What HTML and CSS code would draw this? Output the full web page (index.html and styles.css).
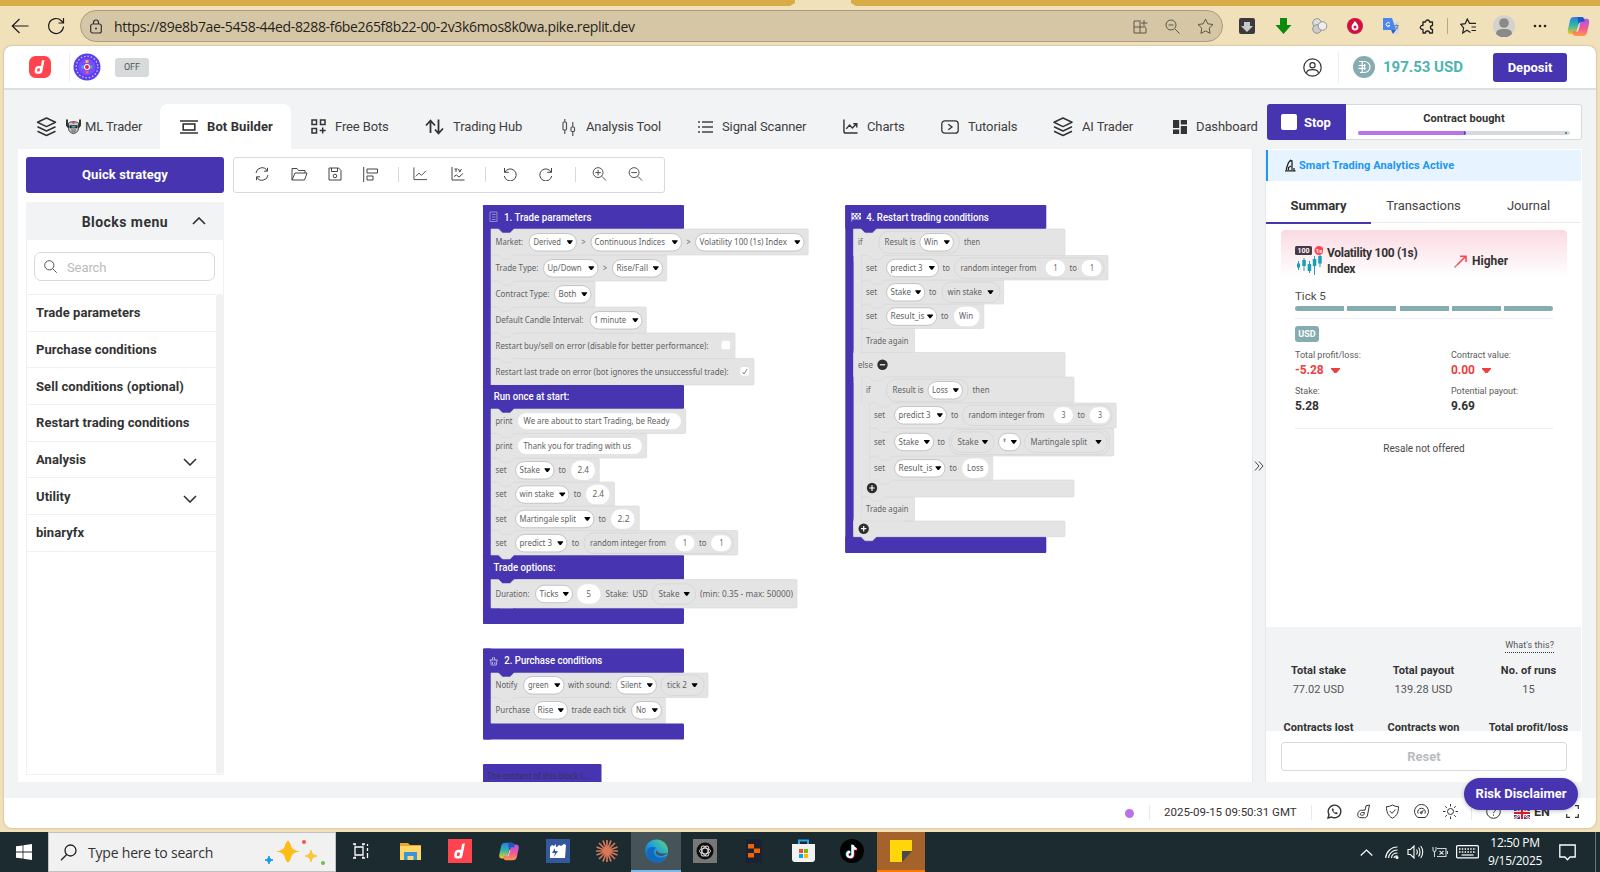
FILE: index.html
```html
<!DOCTYPE html>
<html lang="en">
<head>
<meta charset="utf-8">
<title>Bot Builder</title>
<link rel="stylesheet" href="styles.css">
</head>
<body>
<svg class="defs" width="0" height="0">
  <defs>
    <linearGradient id="cpA" x1="0" y1="0" x2="0" y2="1"><stop offset="0" stop-color="#2a7de1"/><stop offset=".5" stop-color="#2fb8a8"/><stop offset="1" stop-color="#ffc61a"/></linearGradient>
    <linearGradient id="cpB" x1="0" y1="0" x2="0" y2="1"><stop offset="0" stop-color="#a55be8"/><stop offset=".55" stop-color="#f0589a"/><stop offset="1" stop-color="#ff9a4a"/></linearGradient>
    <linearGradient id="edgeG" x1="0" y1="1" x2="1" y2="0"><stop offset="0" stop-color="#0c59a4"/><stop offset=".5" stop-color="#1f9de0"/><stop offset="1" stop-color="#5fdc6a"/></linearGradient>
    <symbol id="copilot" viewBox="0 0 24 24"><path d="M8 2h7c2 0 2.500 1 3 3l.5 2h-3c-2 0-3 1-3.500 3l-2 7c-.6 2-1.500 3-3.500 3H4c-3 0-3.500-2-3-5l2-9c.7-3 2-4 5-4z" fill="url(#cpA)"/><path d="M16 22H9c-2 0-2.500-1-3-3l-.5-2h3c2 0 3-1 3.500-3l2-7c.6-2 1.500-3 3.500-3H20c3 0 3.500 2 3 5l-2 9c-.7 3-2 4-5 4z" fill="url(#cpB)"/><path d="M11 2h4c2 0 2.500 1 3 3l.5 2h-3c-2 0-3 1-3.500 3z" fill="#1e56c8"/><path d="M12.500 9.500l-2 6-1 2h2l2-6z" fill="#f0e1bb" opacity=".8"/></symbol>
    <symbol id="layers" viewBox="0 0 20 20"><g fill="none" stroke="#333" stroke-width="1.500" stroke-linejoin="round"><path d="M10 1l9 4.300-9 4.300-9-4.300z"/><path d="M1 9.700l9 4.300 9-4.300M1 14.200l9 4.300 9-4.300"/></g></symbol>
    <symbol id="deriv" viewBox="0 0 22 22"><rect width="22" height="22" rx="6.500" fill="#ff444f"/><path d="M15.500 4l-2.200 11.500a2.800 2.800 0 0 1-2.800 2.300H8.300c-2 0-3-1.500-2.600-3.200l.3-1.700c.3-1.800 1.600-3 3.400-3h2.600L12.900 4.500zM9.400 12.400c-.7 0-.9.300-1 .9l-.3 1.500c-.1.500.1.700.6.700h1c.6 0 .8-.3.900-.7l.5-2.400z" fill="#fff" fill-rule="evenodd"/></symbol>
  </defs>
</svg>

<div class="tabstrip"><span class="tabstrip-gap"></span></div>

<div class="chrome">
  <svg class="nav-back" viewBox="0 0 18 16"><path d="M17.500 8H1.500M8.500 1L1.300 8l7.200 7" fill="none" stroke="#1b1b1b" stroke-width="1.200"/></svg>
  <svg class="nav-reload" viewBox="0 0 18 18"><path d="M16.500 9.500a7.500 7.500 0 1 1-2.200-5.800l2 2M16.500 1v5h-5" fill="none" stroke="#1b1b1b" stroke-width="1.200"/></svg>
  <div class="urlbar">
    <svg width="12" height="15" viewBox="0 0 12 15"><rect x=".7" y="5" width="10.600" height="9" rx="2" fill="none" stroke="#333" stroke-width="1.200"/><path d="M3.500 5V3.500a2.500 2.500 0 0 1 5 0V5" fill="none" stroke="#333" stroke-width="1.200"/><circle cx="6" cy="9.500" r="1" fill="#333"/></svg>
    <span class="url">https://89e8b7ae-5458-44ed-8288-f6be265f8b22-00-2v3k6mos8k0wa.pike.replit.dev</span>
    <span class="url-actions">
      <svg width="15" height="15" viewBox="0 0 15 15"><path d="M6 2H1v12h12V9M7 1v13M1 8h12M11 1v6M8 4h6.500" fill="none" stroke="#5d5646"/></svg>
      <svg width="15" height="15" viewBox="0 0 15 15"><path d="M10 10l4.500 4.500M3.500 6h5" stroke="#5d5646"/><circle cx="6" cy="6" r="5" fill="none" stroke="#5d5646"/></svg>
      <svg width="17" height="16" viewBox="0 0 17 16"><path d="M8.500 1l2.300 4.800 5.200.7-3.800 3.700.9 5.200-4.600-2.500-4.600 2.500.9-5.200L1 6.500l5.200-.7z" fill="none" stroke="#5d5646"/></svg>
    </span>
  </div>
  <div class="exts">
    <span><svg width="16" height="16" viewBox="0 0 16 16"><rect width="16" height="16" rx="2" fill="#3a3a3c"/><path d="M5 4h6v4h3l-6 6-6-6h3z" fill="#c9c9c9"/></svg></span>
    <span><svg width="17" height="16" viewBox="0 0 17 16"><path d="M5 0h7v7h4.500l-8 9-8-9H5z" fill="#0c8a0c"/></svg></span>
    <span><svg width="17" height="16" viewBox="0 0 17 16"><g stroke="#8a8a8a" stroke-width=".9"><circle cx="6" cy="5" r="4.300" fill="#ddd"/><circle cx="6" cy="11" r="4.300" fill="#ccc"/><circle cx="11.500" cy="8" r="4.300" fill="#eee"/></g></svg></span>
    <span><svg width="16" height="16" viewBox="0 0 16 16"><circle cx="8" cy="8" r="8" fill="#cf1040"/><path d="M8 3c2 2.500 3.400 4 3.400 6a3.400 3.400 0 0 1-6.800 0c0-2 1.400-3.500 3.400-6z" fill="#fff"/><circle cx="8" cy="9" r="1.500" fill="#cf1040"/></svg></span>
    <span><svg width="17" height="16" viewBox="0 0 17 16"><path d="M7 4h9v12H9z" fill="#d7dae0"/><path d="M0 0h9l4 12H0z" fill="#4a86f0"/><path d="M8 12h5l-3 4z" fill="#2b5fc4"/><path d="M7 5.500a2 2 0 1 0 0 2H5.200" stroke="#fff" fill="none"/><path d="M11.500 7.500h4M13.500 6.500v1M15 7.500c-.3 2-1.500 3.500-3 4.500M12.500 8.500l2.500 3" stroke="#70767f" stroke-width=".9" fill="none"/></svg></span>
    <span><svg width="16" height="17" viewBox="0 0 16 17"><path d="M4 4h2.500a2 2 0 1 1 4 0H13.500v3.500a2 2 0 1 0 0 4V15H10.500a2 2 0 0 0-4 0H4V11.300a2 2 0 1 1 0-3.800z" fill="none" stroke="#222" stroke-width="1.300" stroke-linejoin="round"/></svg></span>
    <i></i>
    <span><svg width="17" height="16" viewBox="0 0 17 16"><path d="M10.500 14.500L7 12.300 2.700 15l.9-5L.8 6.300l4.500-.7L7.300 1l2.200 4.300H16M11.500 9H16M11.500 12.500H16" fill="none" stroke="#222" stroke-width="1.200"/></svg></span>
    <span><svg width="22" height="22" viewBox="0 0 22 22"><circle cx="11" cy="11" r="11" fill="#d4d2ce"/><circle cx="11" cy="8" r="4.800" fill="#8c8a88"/><path d="M3 19c0-4 3-5 8-5s8 1 8 5a11 11 0 0 1-16 0z" fill="#8c8a88"/></svg></span>
    <span><svg width="14" height="4" viewBox="0 0 14 4"><g fill="#222"><circle cx="2" cy="2" r="1.300"/><circle cx="7" cy="2" r="1.300"/><circle cx="12" cy="2" r="1.300"/></g></svg></span>
    <span class="wide"><svg width="23" height="23"><use href="#copilot"/></svg></span>
  </div>
</div>

<div class="page">
  <header class="header">
    <svg class="brand" width="22" height="22"><use href="#deriv"/></svg>
    <i class="vline"></i>
    <svg class="spin-logo" width="28" height="28" viewBox="0 0 28 28"><circle cx="14" cy="14" r="13.500" fill="#5b3df0"/><circle cx="14" cy="14" r="10.800" fill="none" stroke="#cfc6ff" stroke-width="1.300" stroke-dasharray="1.500 1.900"/><circle cx="14" cy="14" r="8.500" fill="#7a4cff"/><rect x="12.500" y="7" width="3" height="3" fill="#ffb52e"/><rect x="12.500" y="18" width="3" height="2.500" fill="#ff6a4a"/><rect x="8.500" y="12.500" width="2.500" height="3" fill="#3fb0e8"/><rect x="17" y="12.500" width="2.500" height="3" fill="#44c07a"/><circle cx="14" cy="14" r="3" fill="#fff"/><circle cx="14" cy="14" r="2" fill="#e8174f"/></svg>
    <span class="off">OFF</span>
    <span class="grow"></span>
    <svg class="user" width="19" height="19" viewBox="0 0 19 19"><g fill="none" stroke="#333" stroke-width="1.200"><circle cx="9.500" cy="9.500" r="8.700"/><circle cx="9.500" cy="7.300" r="2.600"/><path d="M3.500 15.500c0-3 2-3.800 6-3.800s6 .8 6 3.800"/></g></svg>
    <i class="vline tall"></i>
    <svg class="coin" width="22" height="22" viewBox="0 0 22 22"><circle cx="11" cy="11" r="11" fill="#85acb0"/><path d="M6 5.500h5.500a5.500 5.500 0 0 1 0 11H7M9.200 5.500v11M11.700 8v6M5.500 9.500h7M5.500 12.300h7" fill="none" stroke="#fff" stroke-width="1.200"/></svg>
    <b class="balance">197.53 USD</b>
    <button class="deposit">Deposit</button>
  </header>

  <div class="body">
    <section class="left">
      <nav class="tabs">
        <div class="tab"><svg width="21" height="20"><use href="#layers"/></svg><svg class="robot" width="15" height="15" viewBox="0 0 15 15"><path d="M1 .5v6l2 2.500M14 .5v6L12 9" fill="none" stroke="#222" stroke-width="1.800"/><path d="M2.500 4C4 3 5 2.800 7.500 2.800S11 3 12.500 4v5.500c0 2.500-2.500 5-5 5s-5-2.500-5-5z" fill="#c6cace" stroke="#222" stroke-width=".8"/><path d="M3.500 6.300h8v3h-8z" fill="#1d2226"/><path d="M6.500 2.500h2v2h-2z" fill="#e23"/><path d="M5.500 7.300h4v1.200h-4z" fill="#5cd0ea"/><path d="M5 11h5M5.500 12.800h4" stroke="#444" stroke-width=".8"/></svg><span>ML Trader</span></div>
        <div class="tab active"><svg width="18" height="14" viewBox="0 0 18 14"><path d="M0 1h18M0 13h18" stroke="#333" stroke-width="1.400"/><rect x="3.200" y="4" width="11.600" height="6" fill="none" stroke="#333" stroke-width="1.600"/></svg><span>Bot Builder</span></div>
        <div class="tab"><svg width="15" height="15" viewBox="0 0 15 15"><g fill="none" stroke="#333" stroke-width="1.500"><rect x="1" y="1" width="4.500" height="4.500"/><rect x="9.500" y="1" width="4.500" height="4.500"/><rect x="1" y="9.500" width="4.500" height="4.500"/><path d="M11.700 8.500v6M8.700 11.500h6"/></g></svg><span>Free Bots</span></div>
        <div class="tab"><svg width="19" height="16" viewBox="0 0 19 16"><path d="M5.500 14V2M1 6.500L5.500 1.500l4.500 5M13.500.5V14M18 9.500L13.500 14.500l-3.500-4" fill="none" stroke="#333" stroke-width="1.800"/></svg><span>Trading Hub</span></div>
        <div class="tab"><svg width="16" height="18" viewBox="0 0 16 18"><g fill="none" stroke="#555" stroke-width="1.200"><rect x="2" y="4" width="3.500" height="8" rx="1"/><path d="M3.800 1v3M3.800 12v4M11.800 4v5M11.800 13v5"/><rect x="10" y="9" width="3.500" height="4.500" rx="1"/></g></svg><span>Analysis Tool</span></div>
        <div class="tab"><svg width="15" height="14" viewBox="0 0 15 14"><path d="M4 2h11M4 7h11M4 12h11M0 2h2M0 7h2M0 12h2" stroke="#444" stroke-width="1.400"/></svg><span>Signal Scanner</span></div>
        <div class="tab"><svg width="15" height="15" viewBox="0 0 16 16"><path d="M1 .5V13c0 1.300.7 2 2 2h12.500M3.500 10.500l3.500-4 3 3 4.500-4.500M11 5h3.700v4" fill="none" stroke="#333" stroke-width="1.500"/></svg><span>Charts</span></div>
        <div class="tab"><svg width="18" height="14" viewBox="0 0 18 14"><rect x=".8" y=".8" width="16.400" height="12.400" rx="3" fill="none" stroke="#333" stroke-width="1.300"/><path d="M7.300 4.300L11 7l-3.700 2.700" fill="none" stroke="#333" stroke-width="1.300"/></svg><span>Tutorials</span></div>
        <div class="tab"><svg width="20" height="20"><use href="#layers"/></svg><span>AI Trader</span></div>
        <div class="tab"><svg width="14" height="14" viewBox="0 0 14 14"><path d="M0 0h6.200v8H0zM7.800 0H14v4.500H7.800zM0 9.500h6.200V14H0zM7.800 6H14v8H7.800z" fill="#333"/></svg><span>Dashboard</span></div>
      </nav>
      <div class="builder">
        <aside class="side">
          <button class="quick">Quick strategy</button>
          <div class="menu-head"><span>Blocks menu</span><svg width="14" height="8" viewBox="0 0 14 8"><path d="M1 7l6-6 6 6" fill="none" stroke="#333" stroke-width="1.700"/></svg></div>
          <div class="menu">
            <div class="search-row"><div class="search"><svg width="13" height="13" viewBox="0 0 13 13"><circle cx="5.300" cy="5.300" r="4.600" fill="none" stroke="#555"/><path d="M8.700 8.700l4 4" stroke="#555"/></svg><span>Search</span></div></div>
            <div class="menu-scroll">
              <ul>
                <li>Trade parameters</li>
                <li>Purchase conditions</li>
                <li>Sell conditions (optional)</li>
                <li>Restart trading conditions</li>
                <li>Analysis<svg width="14" height="8" viewBox="0 0 14 8"><path d="M1 1l6 6 6-6" fill="none" stroke="#333" stroke-width="1.600"/></svg></li>
                <li>Utility<svg width="14" height="8" viewBox="0 0 14 8"><path d="M1 1l6 6 6-6" fill="none" stroke="#333" stroke-width="1.600"/></svg></li>
                <li>binaryfx</li>
              </ul>
              <span class="track"></span>
            </div>
          </div>
        </aside>
        <div class="work">
          <div class="toolbar">
            <svg viewBox="0 0 14 14"><path d="M1 6a6 6 0 0 1 11.300-2M13 8A6 6 0 0 1 1.700 10M12.500.8v3.400H9M1.500 13.200V9.800H5"/></svg>
            <svg class="folder" viewBox="0 0 17 14"><path d="M1 13V1.500h5l1.500 2H14V6M1 13l3-7h12l-2.500 7z"/></svg>
            <svg viewBox="0 0 14 14"><path d="M1 1h9.500L13 3.500V13H1zM3.500 1v3.500h6V1"/><circle cx="7" cy="9" r="1.800"/></svg>
            <svg class="align" viewBox="0 0 15 15"><path d="M.7 0v15M4 2h10.500v4H4zM4 9h6v4H4z"/></svg>
            <i></i>
            <svg viewBox="0 0 15 14"><path d="M1 0v13h14M3 9.500l3.500-3.500 2.500 2.500L14 3.500"/></svg>
            <svg class="tv" viewBox="0 0 14 14"><path d="M1 0v13h12.500M3 9.500l2.500-1.500 2.500 2L12 6.500M3.500 2h3M5 2v3M7.500 2l1.300 3L10.500 2"/></svg>
            <i></i>
            <svg class="undo" viewBox="0 0 14 14"><path d="M1.500 1v4.300h4.300M1.800 5.300A6 6 0 1 1 1.300 9"/></svg>
            <svg viewBox="0 0 14 14"><path d="M12.500 1v4.300H8.200M12.200 5.300A6 6 0 1 0 12.700 9"/></svg>
            <i></i>
            <svg class="zin" viewBox="0 0 15 15"><circle cx="6" cy="6" r="5.300"/><path d="M10 10l4.500 4.500M3 6h6M6 3v6"/></svg>
            <svg class="zout" viewBox="0 0 15 15"><circle cx="6" cy="6" r="5.300"/><path d="M10 10l4.500 4.500M3 6h6"/></svg>
          </div>
          <svg id="workspace" width="1020" height="582" viewBox="233 200 1020 582"></svg>
        </div>
      </div>
    </section>

    <div class="drawer-toggle"><svg width="10" height="10" viewBox="0 0 10 10"><path d="M1 .5L5 5 1 9.500M5 .5L9 5 5 9.500" fill="none" stroke="#444"/></svg></div>

    <section class="right">
      <div class="run">
        <button class="stop"><i></i>Stop</button>
        <div class="status"><span>Contract bought</span><div class="bar"><div class="fill"></div><b></b></div></div>
      </div>
      <div class="panel">
        <div class="banner"><svg width="12" height="13" viewBox="0 0 12 13"><path d="M1 11.800h10.500M2.500 11V9l2-5.500L6.500 1.200 8 2v9M4.500 11V8.500L7 7M10 9v3" fill="none" stroke="#222" stroke-width="1.300"/></svg><span>Smart Trading Analytics Active</span></div>
        <div class="ptabs"><span class="on">Summary</span><span>Transactions</span><span>Journal</span></div>
        <div class="cards">
          <div class="card-head">
            <svg class="vol" width="28" height="30" viewBox="0 0 28 30"><rect width="17" height="9" rx="1.500" fill="#4a3845"/><circle cx="24" cy="4.500" r="4.500" fill="#ff444f"/><text x="8.500" y="7.200" font-size="7" font-weight="700" fill="#fff" text-anchor="middle">100</text><text x="24" y="6.800" font-size="6" font-weight="700" fill="#fff" text-anchor="middle">1s</text><path d="M3.500 15v9M9 12v13M14.500 15v12M19.500 10v19M25 9v12" stroke="#1fa3b4"/><path d="M2 17.500h3v4H2zM7.300 14h3.500v6H7.300zM12.700 18h3.500v7h-3.500zM17.800 13h3.500v7h-3.500zM23.200 10h3.500v7.500h-3.500z" fill="#17a0b2"/></svg>
            <b class="vol-name">Volatility 100 (1s) Index</b>
            <svg class="arrow" width="13" height="13" viewBox="0 0 13 13"><path d="M3 10L11.500 1.500M6 1.200h6V7" fill="none" stroke="#ff444f" stroke-width="1.600"/><path d="M.5 12.500L3 10" stroke="#85acb0" stroke-width="1.600"/></svg>
            <b>Higher</b>
          </div>
          <div class="ticks"><span>Tick 5</span><div><i></i><i></i><i></i><i></i><i></i></div></div>
          <span class="ccy">USD</span>
          <div class="figures">
            <div><label>Total profit/loss:</label><b class="neg">-5.28<svg width="9" height="5" viewBox="0 0 9 5"><path d="M0 0h9v1L5.500 5h-2L0 1z" fill="#ec3f3f"/></svg></b></div>
            <div><label>Contract value:</label><b class="neg">0.00<svg width="9" height="5" viewBox="0 0 9 5"><path d="M0 0h9v1L5.500 5h-2L0 1z" fill="#ec3f3f"/></svg></b></div>
            <div><label>Stake:</label><b>5.28</b></div>
            <div><label>Potential payout:</label><b>9.69</b></div>
          </div>
          <div class="resale">Resale not offered</div>
        </div>
        <div class="stats">
          <div class="what"><span>What's this?</span></div>
          <div class="grid">
            <div><b>Total stake</b><span>77.02 USD</span></div>
            <div><b>Total payout</b><span>139.28 USD</span></div>
            <div><b>No. of runs</b><span>15</span></div>
            <div><b>Contracts lost</b></div>
            <div><b>Contracts won</b></div>
            <div><b>Total profit/loss</b></div>
          </div>
        </div>
        <div class="reset-row"><button>Reset</button></div>
      </div>
    </section>
  </div>

  <footer class="footer">
    <i class="dot"></i><i class="sep s1"></i>
    <span class="date">2025-09-15 09:50:31 GMT</span><i class="sep"></i>
    <div class="ficons">
      <svg viewBox="0 0 15 15"><path d="M1 14l1-3.500A6.300 6.300 0 1 1 4.500 13z" stroke-width="1.400"/><path d="M5 4.500c-.8 2.500 2.500 6 5.300 5.700l.3-1.500-1.700-.8-.8.800C7 8.200 6.500 7.500 6.200 6.800l.7-.8-.7-1.500z" fill="#333" stroke="none"/></svg>
      <svg viewBox="0 0 15 15"><path d="M13.500 1l-2 10c-.3 1.700-1.300 2.700-3 2.700H5c-2.500 0-3.700-1.500-3.200-3.800.4-2.300 1.800-3.700 4-3.700H9L10 1.800zM6.500 8.500c-1.300 0-1.800.5-2 1.500s.2 1.300 1 1.300h1c1 0 1.300-.4 1.500-1.200l.4-1.600z"/></svg>
      <svg viewBox="0 0 15 15"><path d="M7.500 1c2 1.200 4 1.600 6 1.700 0 5-1 8.800-6 11.500-5-2.700-6-6.500-6-11.500 2-.1 4-.5 6-1.700zM4.800 7l2.200 2.300 3.700-3.800"/></svg>
      <svg viewBox="0 0 15 15"><path d="M4 13.500a7 7 0 1 1 7 0zM4 9.500a3.800 3.800 0 1 1 7 0M7.500 8.500L9.500 6"/><circle cx="7.300" cy="8.700" r="1"/></svg>
      <svg viewBox="0 0 15 15"><circle cx="7.500" cy="7.500" r="3"/><path d="M7.500 0v2.500M7.500 12.500V15M0 7.500h2.500M12.500 7.500H15M2.200 2.200l1.700 1.700M11.100 11.100l1.700 1.700M2.200 12.800l1.700-1.700M11.100 3.900l1.700-1.700"/></svg>
    </div>
    <i class="sep"></i>
    <svg class="help" width="15" height="15" viewBox="0 0 15 15"><circle cx="7.500" cy="7.500" r="6.800" fill="none" stroke="#333"/><path d="M5.500 6c0-2.800 4-2.800 4 0 0 1.500-2 1.500-2 3.200M7.500 10.500v1.200" fill="none" stroke="#333"/></svg>
    <svg class="flag" width="16" height="12" viewBox="0 0 16 12"><rect width="16" height="12" fill="#2a4a9c"/><path d="M0 0l16 12M16 0L0 12" stroke="#fff" stroke-width="2.400"/><path d="M0 0l16 12M16 0L0 12" stroke="#d8202f" stroke-width="1"/><path d="M8 0v12M0 6h16" stroke="#fff" stroke-width="4"/><path d="M8 0v12M0 6h16" stroke="#d8202f" stroke-width="2.200"/></svg>
    <b class="lang">EN</b>
    <svg class="full" width="13" height="13" viewBox="0 0 13 13"><path d="M.7 4V.7H4M9 .7h3.300V4M12.300 9v3.300H9M4 12.300H.7V9" fill="none" stroke="#333" stroke-width="1.200"/></svg>
  </footer>
  <button class="risk">Risk Disclaimer</button>
</div>

<div class="taskbar">
  <span class="start"><svg width="16" height="16" viewBox="0 0 16 16"><path d="M0 2.300l6.600-.9v6.200H0zM7.400 1.300L16 0v7.600H7.400zM0 8.400h6.600v6.200L0 13.700zM7.400 8.400H16V16l-8.600-1.300z" fill="#fff"/></svg></span>
  <div class="winsearch">
    <svg width="17" height="17" viewBox="0 0 17 17"><circle cx="10.500" cy="6.500" r="5.500" fill="none" stroke="#222" stroke-width="1.300"/><path d="M6.700 10.500L1 16.300" stroke="#222" stroke-width="1.300"/></svg>
    <span>Type here to search</span>
    <svg class="spark" width="62" height="26" viewBox="0 0 62 26"><path d="M24 1c2 7 4 10 11 11.500-7 1.500-9 4.500-11 11.500-2-7-4-10-11-11.500C20 11 22 8 24 1z" fill="#fdbc16"/><path d="M24 2c3 1 3 7 5 9s5 0 6 1.500c-1 1.500-4-.5-6 1.500s-2 9-5 9-3-7-5-9-5 0-6-1.500c1-1.500 4 .5 6-1.500s2-8 5-9z" fill="#fdbc16"/><path d="M47 11c1 4 2 5 6 6-4 1-5 2-6 6-1-4-2-5-6-6 4-1 5-2 6-6z" fill="#fdc63a" stroke="#fdc63a"/><path d="M5 17c.7 2.600 1.400 3.300 4 4-2.600.7-3.300 1.400-4 4-.7-2.600-1.400-3.300-4-4 2.600-.7 3.300-1.400 4-4z" fill="#1a9be8" stroke="#1a9be8"/><circle cx="40" cy="3" r="2" fill="#f05a3a"/><circle cx="59" cy="24" r="2" fill="#6cc04a"/></svg>
  </div>
  <div class="apps">
    <span class="first"><svg width="17" height="16" viewBox="0 0 17 16"><path d="M3 4h8v8H3zM1 1h3M10 1h3M1 15h3M10 15h3M3 1v1.500M11 1v1.500M3 15v-1.500M11 15v-1.500M15.500 1v2M15.500 5v3M15.500 10v5" fill="none" stroke="#fff" stroke-width="1.300"/></svg></span>
    <span><svg width="23" height="21" viewBox="0 0 23 19"><path d="M1 1h8l2 2h11v15H1z" fill="#e8a72c"/><path d="M1 4h21v14H1z" fill="#ffd766"/><path d="M5 18v-8h13v8h-3.500v-4h-6v4z" fill="#3a94dc"/></svg></span>
    <span><svg width="24" height="24" viewBox="0 0 22 22"><rect width="22" height="22" fill="#ff444f"/><path d="M15.500 4l-2.200 11.500a2.800 2.800 0 0 1-2.800 2.300H8.300c-2 0-3-1.500-2.600-3.200l.3-1.700c.3-1.800 1.600-3 3.400-3h2.600L12.900 4.500zM9.400 12.400c-.7 0-.9.300-1 .9l-.3 1.500c-.1.500.1.700.6.700h1c.6 0 .8-.3.900-.7l.5-2.400z" fill="#fff" fill-rule="evenodd"/></svg></span>
    <span><svg width="22" height="21"><use href="#copilot"/></svg></span>
    <span><svg width="24" height="24" viewBox="0 0 24 24"><rect width="24" height="24" fill="#35589c"/><path d="M4 8l2-2 2 1 2-2v3h1l2-2 2 1 3-2 2 1-1 13H4z" fill="#fff"/><path d="M9 9l-3 5h3l-1 4 4-6H9z" fill="#35589c"/></svg></span>
    <span><svg width="24" height="24" viewBox="0 0 24 24"><path d="M12 1v22M1 12h22M4 4l16 16M20 4L4 20M8 1.500l8 21M16 1.500l-8 21M1.500 8l21 8M1.500 16l21-8" stroke="#d97757" stroke-width="1.700"/></svg></span>
    <span class="edge"><svg width="25" height="24" viewBox="0 0 24 24"><circle cx="12" cy="12" r="11.500" fill="url(#edgeG)"/><path d="M3 16C1 8 8 6.500 12 9c-3 1-4 5-1 8 3 2.500 8 2 11-.5-2 5-6 7-10 7-5 0-8-3-9-7.500z" fill="#1269bd"/><path d="M13 16c-2-1.500-2-3.500-.5-5 .5 3 3 4.500 10.500 3-1 2-6 4.500-10 2z" fill="#46545a"/></svg></span>
    <span><svg width="24" height="24" viewBox="0 0 24 24"><rect width="24" height="24" fill="#777"/><circle cx="12" cy="12" r="8.500" fill="#0d0d0d"/><g fill="none" stroke="#ddd" stroke-width=".9"><ellipse cx="12" cy="12" rx="5.500" ry="2.800"/><ellipse cx="12" cy="12" rx="5.500" ry="2.800" transform="rotate(60 12 12)"/><ellipse cx="12" cy="12" rx="5.500" ry="2.800" transform="rotate(120 12 12)"/></g></svg></span>
    <span><svg width="16" height="24" viewBox="0 0 16 24"><rect width="16" height="24" fill="#192133"/><path d="M2 5h6v4.500H2zM8 9.500h6V14H8zM2 14h6v4.500H2z" fill="#f26207"/></svg></span>
    <span><svg width="25" height="24" viewBox="0 0 25 24"><path d="M8 6V1.500h9V6" fill="none" stroke="#2ba4e8" stroke-width="2"/><path d="M1 5h23v15c0 2-1 3-3 3H4c-2 0-3-1-3-3z" fill="#f2f2f2"/><path d="M8 10h4v4H8z" fill="#f25022"/><path d="M13 10h4v4h-4z" fill="#7fba00"/><path d="M8 15h4v4H8z" fill="#00a4ef"/><path d="M13 15h4v4h-4z" fill="#ffb900"/></svg></span>
    <span><svg width="24" height="24" viewBox="0 0 24 24"><circle cx="12" cy="12" r="12" fill="#000"/><g fill="none" stroke-width="2"><path d="M12 5.500v9.500a2.700 2.700 0 1 1-2.700-2.700M12 6c.3 2 1.700 3.300 3.700 3.500" stroke="#25f4ee"/><path d="M13.500 6.500V16a2.700 2.700 0 1 1-2.700-2.700M13.500 7c.3 2 1.700 3.300 3.700 3.500" stroke="#fe2c55"/><path d="M12.800 6v9.500a2.700 2.700 0 1 1-2.700-2.700M12.800 6.500c.3 2 1.700 3.300 3.700 3.500" stroke="#fff"/></g></svg></span>
    <span class="sticky"><svg width="22" height="22" viewBox="0 0 22 22"><path d="M0 0h22v11H12v11H0z" fill="#ffd60a"/><path d="M12 22V11h10z" fill="#4a4a4a"/></svg></span>
  </div>
  <div class="tray">
    <svg width="13" height="7" viewBox="0 0 13 7"><path d="M.7 6.500l5.800-5.500 5.800 5.500" fill="none" stroke="#fff" stroke-width="1.200"/></svg>
    <svg class="wifi" width="14" height="13" viewBox="0 0 14 13"><g fill="none" stroke="#fff" stroke-width="1.100"><path d="M.7 12C1 6 6 1 12.500 1M3.500 12c.3-4.500 4-8 9-8M6.500 12c.2-3 2.500-5 6-5M9 12c.2-1.500 1.500-2.300 3.500-2.300"/></g><circle cx="12" cy="11.500" r="1.500" fill="#fff"/></svg>
    <svg class="spk" width="17" height="14" viewBox="0 0 17 14"><path d="M1 4.500h2.500L7 1v12L3.500 9.500H1zM9.500 4.500c1 1.500 1 3.500 0 5M11.500 2.500c2 2.500 2 6.500 0 9M13.700 1c2.700 3.500 2.700 8.500 0 12" fill="none" stroke="#fff" stroke-width="1.100"/></svg>
    <svg class="bat" width="16" height="12" viewBox="0 0 16 12"><path d="M5 2.500h9v8H5M15.500 5v3M7.500 5l4 3.500M11.500 5l-4 3.500M1 1v3a1.500 1.500 0 0 0 3 0V1M2.500 5v6" fill="none" stroke="#cfd4d6" stroke-width="1.100"/></svg>
    <svg class="kbd" width="23" height="14" viewBox="0 0 23 14"><rect x=".6" y=".6" width="21.800" height="12.300" rx="1" fill="none" stroke="#fff" stroke-width="1.200"/><path d="M3 4h17M3 7h17" stroke="#fff" stroke-width="1.400" stroke-dasharray="1.500 1.300"/><path d="M5.500 10h12" stroke="#fff" stroke-width="1.200"/></svg>
    <div class="clock"><span>12:50 PM</span><span>9/15/2025</span></div>
    <svg class="note" width="17" height="17" viewBox="0 0 17 17"><path d="M.8 1h15.400v12H11l-2.500 2.700L6 13H.8z" fill="none" stroke="#fff" stroke-width="1.300"/></svg>
    <i></i>
  </div>
</div>
<script src="workspace.js"></script>
</body>
</html>
```
FILE: styles.css
```css
* { box-sizing: border-box; }
body { margin: 0; width: 1600px; height: 872px; overflow: hidden; display: flex; flex-direction: column; background: #f0e1bb; font-family: Roboto, "Liberation Sans", sans-serif; color: #333; font-size: 13px; }
svg { display: block; flex: none; }
.defs { position: absolute; }
button { border: 0; padding: 0; margin: 0; font-family: inherit; color: #fff; background: #4634b0; font-weight: 700; }
i { font-style: normal; flex: none; }
.grow { flex: 1; }

.tabstrip { height: 6px; background: #d8ad47; flex: none; padding-left: 790px; }
.tabstrip-gap { display: block; width: 66px; height: 6px; background: #f0e1bb; clip-path: polygon(5px 0, 61px 0, 61px 3px, 66px 6px, 0 6px, 5px 3px); }
.chrome { height: 40px; flex: none; display: flex; align-items: center; padding-left: 11px; font-family: "Open Sans", "Noto Sans", sans-serif; }
.nav-back { width: 18px; height: 16px; }
.nav-reload { width: 18px; height: 18px; margin-left: 18px; }
.urlbar { width: 1143px; height: 32px; margin-left: 15px; border: 1px solid #a99c80; border-radius: 16px; background: #d5c7a5; display: flex; align-items: center; padding: 0 8px 0 9px; flex: none; }
.url { margin-left: 12px; font-size: 14px; letter-spacing: -.33px; color: #26231c; white-space: nowrap; }
.url-actions { margin-left: auto; display: flex; gap: 17px; align-items: center; }
.exts { display: flex; align-items: center; padding-left: 6px; }
.exts span { width: 36px; display: flex; justify-content: center; }
.exts .wide { width: 40px; }
.exts i { width: 1px; height: 16px; background: #b3a88b; margin: 0 2px 0 2px; }

.page { position: relative; width: 1592px; height: 782px; margin-left: 4px; background: #fff; border-radius: 8px; overflow: hidden; display: flex; flex-direction: column; flex: none; box-shadow: 0 0 2px #a89a74; }
.header { height: 44px; border-bottom: 2px solid #dcdfe0; display: flex; align-items: center; padding-left: 25px; flex: none; }
.vline { width: 1px; height: 29px; background: #eceeef; margin: 0 3px 0 18px; }
.off { width: 34px; height: 19px; margin-left: 14px; border-radius: 3px; background: #d6dadb; font-size: 9px; line-height: 19px; text-align: center; color: #555; }
.vline.tall { height: 31px; margin: 0 14px 0 16px; }
.balance { width: 110px; margin-left: 8px; font-size: 15px; letter-spacing: 0; color: #4bb4b3; }
.deposit { width: 74px; height: 29px; border-radius: 3px; font-size: 13px; margin-right: 29px; }

.body { height: 708px; background: #f2f3f5; display: flex; flex: none; }
.left { width: 1249px; padding-left: 14px; }
.tabs { height: 59px; margin-left: -2px; padding-top: 14px; display: grid; grid-template-columns: 144px 131px 114px 136px 137px 145px 98px 112px 120px 1fr; }
.tab { display: flex; align-items: center; gap: 9px; padding-left: 20px; white-space: nowrap; font-size: 13px; letter-spacing: -.12px; color: #404040; }
.tab .robot { margin-right: -5px; }
.tab.active { background: #fff; border-radius: 8px 8px 0 0; font-weight: 700; letter-spacing: .1px; color: #333; }
.builder { height: 633px; background: #fff; display: flex; padding: 8px 0 0 8px; border-right: 1px solid #e6e8ea; }
.side { width: 198px; flex: none; }
.quick { display: block; width: 198px; height: 36px; border-radius: 3px; font-size: 13px; letter-spacing: .1px; padding-bottom: 2px; }
.menu-head { height: 38px; margin-top: 9px; background: #f2f3f5; display: flex; align-items: center; justify-content: flex-end; padding-right: 18px; font-weight: 700; font-size: 14px; letter-spacing: .45px; gap: 24px; }
.menu-head span { padding-top: 2px; }
.menu { height: 535px; border: 1px solid #f0f1f2; border-top: 0; }
.search-row { height: 54px; padding: 12px 8px 0 7px; }
.search { height: 29px; border: 1px solid #d6dadb; border-radius: 7px; display: flex; align-items: center; gap: 10px; padding-left: 9px; color: #b8bbbd; letter-spacing: -.1px; }
.search span { padding-top: 2px; }
.menu-scroll { height: 480px; display: flex; }
ul { list-style: none; margin: 0; padding: 0; width: 189px; border-top: 1px solid #eff0f1; }
li { height: 36.7px; border-bottom: 1px solid #eff0f1; padding: 0 19px 0 9px; display: flex; align-items: center; justify-content: space-between; font-weight: 700; font-size: 13px; letter-spacing: .06px; }
li svg { margin-top: 5px; }
.track { width: 7px; background: #f1f1f1; border-radius: 3px; }
.work { position: relative; width: 1020px; margin-left: 9px; }
.toolbar { width: 432px; height: 36px; border: 1px solid #d6dadb; border-radius: 3px; display: flex; align-items: center; padding: 0 0 2px 21px; margin-bottom: 7px; }
.toolbar svg { width: 14px; height: 14px; fill: none; stroke: #444; stroke-width: 1; margin-right: 22px; }
.toolbar .folder { width: 17px; margin-right: 20px; }
.toolbar .align { width: 15px; height: 15px; margin: 0 20px 0 -1px; }
.toolbar .tv { margin-left: 2px; margin-right: 20px; }
.toolbar i { width: 1px; height: 15px; background: #d6dadb; margin-right: 14px; }
.toolbar .undo { margin-left: 3px; }
.toolbar .zin { width: 15px; margin-left: 2px; margin-right: 21px; }
.toolbar .zout { width: 15px; }

.drawer-toggle { width: 12px; display: flex; align-items: center; justify-content: center; padding-top: 43px; }
.right { width: 317px; padding-top: 14px; }
.run { height: 36px; width: 315px; margin-left: 2px; display: flex; }
.stop { width: 79px; border-radius: 3px 0 0 3px; font-size: 13px; display: flex; align-items: center; gap: 7px; padding-left: 14px; }
.stop i { width: 16px; height: 16px; background: #fff; border-radius: 2px; }
.status { flex: 1; background: #fff; border: 1px solid #d6dadb; border-left: 0; border-radius: 0 3px 3px 0; padding: 6px 11px 0 12px; text-align: center; font-size: 11px; letter-spacing: .1px; font-weight: 700; }
.status span { display: block; height: 15px; line-height: 15px; }
.bar { height: 4px; margin-top: 5px; border-radius: 2px; background: #d6dadb; display: flex; justify-content: space-between; align-items: center; padding-right: 3px; }
.fill { width: 108px; height: 4px; border-radius: 2px; background: #b873e8; border-right: 2px solid #6a3fc0; }
.bar b { width: 2px; height: 2px; background: #4b9a99; }
.panel { margin-top: 9px; width: 317px; height: 633px; background: #fff; border-left: 1px solid #e6e8ea; padding-top: 1px; }
.banner { width: 315px; height: 31px; background: #e7f3fe; border-left: 2px solid #2196f3; display: flex; align-items: center; gap: 3px; padding-left: 16px; font-size: 11px; letter-spacing: .08px; font-weight: 700; color: #2196f3; }
.ptabs { width: 315px; height: 42px; display: grid; grid-template-columns: 1fr 1fr 1fr; font-size: 13px; letter-spacing: -.05px; text-align: center; line-height: 50px; }
.ptabs span { border-bottom: 1px solid #e9ebec; height: 42px; color: #444; }
.ptabs .on { border-bottom: 2px solid #4634b0; height: 43px; font-weight: 700; color: #333; }
.cards { height: 404px; padding: 7px 15px 0; }
.card-head { height: 47px; border-radius: 4px; background: linear-gradient(#fadae2, #fff); display: flex; align-items: center; padding: 15px 0 0 14px; font-size: 12px; line-height: 16px; }
.vol { margin-top: -1px; }
.vol-name { width: 127px; padding-right: 29px; margin-left: 4px; letter-spacing: -.28px; }
.arrow { margin-right: 5px; }
.ticks { margin: 11px 14px 0; border-bottom: 1px solid #eceeef; height: 31px; font-size: 11.500px; line-height: 16px; color: #4a4a4a; }
.ticks div { display: flex; justify-content: space-between; margin-top: 2px; }
.ticks i { width: 49px; height: 5px; background: #85acb0; }
.ticks i:first-child { border-radius: 3px 0 0 3px; }
.ticks i:last-child { border-radius: 0 3px 3px 0; }
.ccy { display: block; width: 24px; height: 16px; margin: 7px 14px 0; border-radius: 3px; background: #85acb0; color: #fff; font-size: 9px; font-weight: 700; line-height: 16px; text-align: center; }
.figures { margin: 6px 14px 0; height: 81px; border-bottom: 1px solid #eceeef; display: grid; grid-template-columns: 156px 1fr; grid-auto-rows: 36px; }
.figures label { display: block; font-size: 9px; line-height: 14px; color: #5c5c5c; }
.figures b { font-size: 12px; letter-spacing: -.05px; line-height: 16px; display: flex; align-items: center; gap: 7px; }
.neg { color: #ec3f3f; }
.resale { text-align: center; margin-top: 12px; font-size: 10px; line-height: 16px; color: #4a4a4a; }
.stats { width: 315px; height: 104px; overflow: hidden; background: #f2f3f5; padding-top: 12px; }
.what { display: flex; justify-content: flex-end; padding-right: 27px; font-size: 9px; letter-spacing: .08px; color: #555; }
.what span { border-bottom: 1px dotted #333; line-height: 13px; }
.grid { display: grid; grid-template-columns: 105px 105px 105px; grid-auto-rows: 57px; margin-top: 10px; text-align: center; font-size: 11px; letter-spacing: .05px; }
.grid b, .grid span { display: block; line-height: 16px; white-space: nowrap; }
.grid span { margin-top: 3px; color: #555; }
.reset-row { padding: 11px 15px 0; }
.reset-row button { width: 286px; height: 29px; background: #fff; border: 1px solid #d6dadb; border-radius: 3px; color: #b9bcbe; font-size: 13px; }

.footer { height: 30px; display: flex; align-items: center; padding: 0 0 3px 1121px; flex: none; }
.dot { width: 9px; height: 9px; border-radius: 50%; background: #b873e8; margin-top: 3px; }
.sep { width: 1px; height: 15px; background: #e6e8ea; margin-top: 2px; }
.s1 { margin: 2px 14px 0 15px; }
.date { width: 147px; font-size: 11.500px; white-space: nowrap; }
.ficons { display: flex; gap: 14px; padding: 0 13px 0 15px; }
.ficons svg { width: 15px; height: 15px; fill: none; stroke: #333; stroke-width: 1; }
.help { margin: 0 13px 0 14px; }
.flag { margin-top: 2px; }
.lang { font-size: 12.500px; margin-right: 16px; margin-left: 4px; }
.risk { position: absolute; left: 1460px; top: 732px; width: 114px; height: 32px; border-radius: 16px; font-size: 13px; padding-bottom: 2px; box-shadow: 0 1px 4px rgba(0,0,0,.25); }

.taskbar { margin-top: 4px; height: 40px; background: #1b2b30; display: flex; align-items: center; font-family: "Open Sans", "Noto Sans", sans-serif; flex: none; }
.start { width: 48px; display: flex; justify-content: center; flex: none; }
.winsearch { width: 288px; height: 40px; background: #f1f1f1; border: 1px solid #c2c2c2; display: flex; align-items: center; padding-left: 11px; font-size: 14px; letter-spacing: -.2px; flex: none; }
.winsearch span { margin-left: 11px; width: 176px; white-space: nowrap; }
.apps { display: flex; height: 40px; }
.apps span { width: 49.100px; display: flex; align-items: center; justify-content: center; border-bottom: 2px solid transparent; }
.apps .first { width: 50px; padding-right: 1px; }
.apps .edge { background: #46545a; border-bottom-color: #76b9ed; }
.apps .sticky { background: #a5622b; border-bottom-color: #ff7a00; width: 48px; }
.tray { margin-left: auto; display: flex; align-items: center; color: #fff; height: 40px; }
.wifi { margin-left: 12px; }
.spk { margin-left: 8px; }
.bat { margin-left: 8px; }
.kbd { margin-left: 8px; }
.clock { width: 72px; display: flex; flex-direction: column; align-items: center; font-size: 12px; line-height: 18px; letter-spacing: -.3px; }
.note { margin-left: 8px; }
.tray i { width: 1px; height: 40px; background: #68757a; margin: 0 4px 0 19px; }

#workspace text { font-family: "Noto Sans", "Open Sans", sans-serif; font-size: 8.200px; fill: #626262; }
#workspace .title { font-family: Roboto, "Liberation Sans", sans-serif; font-size: 10px; font-weight: 500; fill: #fff; }
#workspace .faded { fill: #3a3158; font-size: 8.800px; }
#workspace .base { fill: #4634b0; }
#workspace .block { fill: #e4e4e4; stroke: #d7d7d7; stroke-width: .6; }
#workspace .dropdown { fill: #fff; stroke: #c4c4c4; stroke-width: 1; }
#workspace .slot { fill: #e4e4e4; stroke: #d6d6d6; stroke-width: .9; }
#workspace .value { fill: #fff; }
#workspace .caret { fill: #000; }
```
FILE: workspace.js
```js
const NS = "http://www.w3.org/2000/svg";
const root = document.getElementById("workspace");

function add(name, attrs, text) {
  const node = document.createElementNS(NS, name);
  for (const key in attrs) node.setAttribute(key, attrs[key]);
  if (text) node.textContent = text;
  root.appendChild(node);
}

const label = (x, yc, w, text, cls = "label", dy = 2.8) =>
  add("text", { x, y: yc + dy, textLength: w, lengthAdjust: "spacingAndGlyphs", class: cls }, text);

const title = (x, yc, w, text) => label(x, yc, w, text, "title", 3.6);

function pill(x1, x2, yc, h, cls) {
  add("rect", { x: x1, y: yc - h / 2, width: x2 - x1, height: h, rx: Math.min(h / 2, 9.5), class: cls });
}

function caret(x, yc) {
  add("path", { d: `M${x - 2.8} ${yc - 2}h5.600v.8l-2.200 3h-1.200l-2.200-3z`, class: "caret" });
}

function dropdown(x1, x2, yc, tx, tw, text, caretX = x2 - 7.2) {
  pill(x1 + .5, x2 - .5, yc, 17.5, "dropdown");
  label(tx, yc, tw, text);
  caret(caretX, yc);
}

function slot(x1, x2, yc, h = 20.5) { pill(x1, x2, yc, h, "slot"); }

function value(x1, x2, yc, tx, tw, text, h = 19.5) {
  pill(x1, x2, yc, h, "value");
  label(tx, yc, tw, text);
}

function variable(x1, x2, yc, tx, tw, text, caretX) {
  slot(x1, x2, yc);
  label(tx, yc, tw, text);
  caret(caretX, yc);
}

/* A purple band; with a tab it also fills the notch of the block below it. */
function band(x, y1, y2, tab) {
  add("rect", { x, y: y1, width: 201, height: y2 - y1, rx: 1.2, class: "base" });
  if (tab) add("rect", { x: x + 9, y: y2 - 2, width: 24, height: 7, class: "base" });
}

function spine(x, y1, y2) { add("rect", { x, y: y1, width: 8.5, height: y2 - y1, rx: 1.2, class: "base" }); }

function block(x1, y1, x2, y2, notch = true) {
  const top = notch ? "h7.500l4 4h7.500l4-4" : "";
  add("path", { d: `M${x1} ${y1}${top}H${x2 - 1.2}q1.200 0 1.200 1.200V${y2 - 1.2}q0 1.200-1.200 1.200H${x1 + 23}l-4 4h-7.500l-4-4H${x1}z`, class: "block" });
}

const plain = (x, y, w, h) => add("rect", { x, y, width: w, height: h, fill: "#e4e4e4" });

function randomInteger(x, yc, n) {
  slot(x, x + 149.5, yc);
  label(x + 6, yc, 76, "random integer from");
  value(x + 91, x + 110.5, yc, x + 99, 4, n, 16);
  label(x + 115, yc, 7.5, "to");
  value(x + 127, x + 147, yc, x + 135.5, 4, n, 16);
}

function circleButton(x, y, plus) {
  add("circle", { cx: x, cy: y, r: 5.2, fill: "#2e2e2e" });
  add("path", { d: `M${x - 2.7} ${y}h5.400` + (plus ? `M${x} ${y - 2.7}v5.400` : ""), stroke: "#fff", "stroke-width": 1.2 });
}

/* 1. Trade parameters */
spine(483, 205, 624);
band(483, 205, 229, true);
add("path", { d: "M490 212h7v9.500h-7zM492 214.500h3.500M492 217h3.500M492 219.500h3.500", fill: "none", stroke: "#a79cdc", "stroke-width": .8 });
title(504, 217.7, 87.5, "1. Trade parameters");
block(491, 358.5, 754, 385);
block(491, 333, 735, 358.5);
block(491, 307, 646.3, 333);
block(491, 281, 595, 307);
block(491, 255, 666.7, 281);
block(491, 229, 808.2, 255);
band(483, 385, 409, true);

let y = 242.3;
label(495.5, y, 27.5, "Market:");
dropdown(528.5, 577, y, 533.5, 27.5, "Derived");
label(581.5, y, 4, ">");
dropdown(590.5, 682, y, 594.5, 70.5, "Continuous Indices");
label(686.5, y, 4, ">");
dropdown(695, 804.5, y, 699.5, 87.5, "Volatility 100 (1s) Index");
y = 268.3;
label(495.5, y, 43, "Trade Type:");
dropdown(543, 598.5, y, 547.5, 34, "Up/Down");
label(603, y, 4, ">");
dropdown(612, 663, y, 616.5, 31.5, "Rise/Fall");
y = 294.3;
label(495.5, y, 54, "Contract Type:");
dropdown(554, 591.5, y, 558.5, 18, "Both");
y = 320.3;
label(495.5, y, 88, "Default Candle Interval:");
dropdown(589.5, 642.5, y, 594, 32, "1 minute");
label(495.5, 346, 213, "Restart buy/sell on error (disable for better performance):");
add("rect", { x: 721.5, y: 340.7, width: 8.5, height: 8.5, rx: 1.5, fill: "#fff" });
label(495.5, 372, 233, "Restart last trade on error (bot ignores the unsuccessful trade):");
add("rect", { x: 740.5, y: 367, width: 8.5, height: 8.5, rx: 1.5, fill: "#fff" });
add("path", { d: "M742.500 372l1.500 2 3.200-5", fill: "none", stroke: "#666", "stroke-width": .8 });

title(493.8, 396.8, 75.5, "Run once at start:");
band(483, 555, 579.5, true);
block(491, 530.5, 737.7, 555);
block(491, 506, 639.3, 530.5);
block(491, 482, 614.5, 506);
block(491, 458, 599.3, 482);
block(491, 433.5, 646.7, 458);
block(491, 409, 685.7, 433.5);
y = 421.2;
label(495.5, y, 17, "print");
value(518, 681, y, 523.5, 146, "We are about to start Trading, be Ready", 16);
y = 446;
label(495.5, y, 17, "print");
value(518, 642, y, 523.5, 107.5, "Thank you for trading with us", 16);
y = 470.3;
label(495.5, y, 11, "set");
dropdown(515, 554.5, y, 519.5, 20.5, "Stake");
label(558.5, y, 7.5, "to");
value(571, 595, y, 577.5, 11.5, "2.4");
y = 494.5;
label(495.5, y, 11, "set");
dropdown(515, 569.5, y, 519.5, 34.5, "win stake");
label(573.8, y, 7.5, "to");
value(586, 609.5, y, 592.5, 11.5, "2.4");
y = 519;
label(495.5, y, 11, "set");
dropdown(515, 594.5, y, 519.5, 56.5, "Martingale split");
label(598.5, y, 7.5, "to");
value(611, 634.5, y, 617.5, 12, "2.2");
y = 543.2;
label(495.5, y, 11, "set");
dropdown(515, 567.5, y, 519.5, 32.5, "predict 3");
label(571.8, y, 7.5, "to");
randomInteger(584, y, "1");
title(493.5, 567.8, 62, "Trade options:");
band(483, 608, 624);
block(491, 579.5, 797, 608);
add("rect", { x: 498, y: 608.4, width: 17, height: 5, class: "base" });
y = 594;
label(495.5, y, 34, "Duration:");
dropdown(535, 573, y, 539.5, 19, "Ticks");
value(577, 600.5, y, 586.5, 4.5, "5");
label(605.5, y, 23, "Stake:");
label(632.5, y, 15.5, "USD");
variable(652, 695.5, y, 658.5, 21, "Stake", 686.7);
label(700, y, 93, "(min: 0.35 - max: 50000)");

/* 2. Purchase conditions */
spine(483, 648.5, 739.5);
band(483, 648.5, 673, true);
add("path", { d: "M489.500 660h8M490.500 660l.8 5h5l.8-5M492 660l1-3M495 660l-1-3M492.500 662v2M494.800 662v2", fill: "none", stroke: "#c3bbe8", "stroke-width": .9 });
title(504.3, 660.8, 98, "2. Purchase conditions");
block(491, 697.5, 665.3, 723.5);
block(491, 673, 708, 697.5);
band(483, 723.5, 739.5);
y = 685.3;
label(495.5, y, 22, "Notify");
dropdown(523, 564.5, y, 528, 20.5, "green");
label(568, y, 43.5, "with sound:");
dropdown(616, 657, y, 620.5, 21, "Silent");
variable(661, 704, y, 667, 20, "tick 2", 694.6);
y = 710.3;
label(495.5, y, 34.5, "Purchase");
dropdown(533.5, 568, y, 537.5, 16, "Rise");
label(571.5, y, 54.5, "trade each tick");
dropdown(631, 662, y, 636, 10, "No");

/* Collapsed block at the lower edge of the workspace */
add("rect", { x: 483, y: 764, width: 118.5, height: 40, rx: 1.2, class: "base" });
label(487.3, 776.2, 101.5, "The content of this block i...", "faded");

/* 4. Restart trading conditions */
spine(845.3, 205, 553);
band(845.3, 205, 229, true);
band(845.3, 536.5, 553);
add("path", { d: "M851.700 212.500v9", fill: "none", stroke: "#cfc8f0", "stroke-width": .8 });
add("rect", { x: 852, y: 213, width: 9, height: 6.4, fill: "#e6e2f7" });
add("path", { d: "M854 213.500h1.500v1.500H854zM857.500 213.500h1.500v1.500h-1.500zM852.500 215.300h1.500v1.500h-1.500zM856 215.300h1.500v1.500H856zM859.200 215.300h1.500v1.500h-1.500zM854 217.200h1.500v1.500H854zM857.500 217.200h1.500v1.500h-1.500z", class: "base" });
title(866.3, 217.7, 122.5, "4. Restart trading conditions");
block(853.5, 521, 1065, 536.7, false);
block(853.5, 229, 1065, 255.5);
plain(853.8, 253, 30, 9);
plain(853.8, 254, 8, 270);
block(861.5, 497, 914.5, 521);
block(861.5, 328.5, 914.5, 352.5);
block(861.5, 304, 983.8, 328.5);
block(861.5, 280, 1003.7, 304);
block(861.5, 255.5, 1108, 280);
add("rect", { x: 853.5, y: 352.5, width: 211.5, height: 24.5, rx: 1, class: "block" });
plain(853.8, 350, 7.4, 6);
plain(853.8, 373, 30, 10);
plain(853.8, 518, 50, 10);
label(866, 509.5, 42.5, "Trade again");
add("path", { d: "M861.500 521h53", stroke: "#dadada", "stroke-width": .6 });
block(861.5, 480, 1074, 497, false);
block(861.5, 377, 1074, 403);
plain(861.8, 400, 30, 9);
plain(861.8, 402, 8, 80);
block(869.5, 456, 992.7, 480);
block(869.5, 428, 1113.7, 456);
block(869.5, 403, 1116.3, 428);

y = 242.3;
label(858, y, 4.5, "if");
slot(879, 959, y, 22);
label(884.5, y, 31, "Result is");
dropdown(919.3, 954, y, 924, 14, "Win");
label(964, y, 16, "then");
y = 268;
label(866, y, 11, "set");
dropdown(886, 939, y, 890.5, 32, "predict 3");
label(942.5, y, 7.5, "to");
randomInteger(954.5, y, "1");
y = 292.3;
label(866, y, 11, "set");
dropdown(886, 925.3, y, 890.5, 20.5, "Stake");
label(929, y, 7.5, "to");
variable(942, 1000, y, 947.5, 34.5, "win stake", 990.5);
y = 316.5;
label(866, y, 11, "set");
dropdown(886, 937.3, y, 890.5, 34, "Result_is");
label(941, y, 7.5, "to");
value(954, 979.5, y, 959, 14, "Win");
label(866, 341.3, 42.5, "Trade again");
label(858, 365.3, 15, "else");
circleButton(882.5, 364.8, false);

y = 390.3;
label(866, y, 4.5, "if");
slot(886.5, 968, y, 22);
label(892.5, y, 31, "Result is");
dropdown(927.5, 963, y, 932, 16, "Loss");
label(972.5, y, 17, "then");
y = 415.3;
label(874, y, 11, "set");
dropdown(894, 947, y, 898.5, 32, "predict 3");
label(951, y, 7.5, "to");
randomInteger(962.5, y, "3");
y = 442;
label(874, y, 11, "set");
dropdown(894, 934, y, 898.5, 20.5, "Stake");
label(937.5, y, 7.5, "to");
slot(949.5, 1109.5, y, 25);
variable(951.5, 994, y, 957.5, 21, "Stake", 985);
dropdown(998, 1021, y, 1003, 3, "*");
variable(1024.5, 1107, y, 1030.5, 56.5, "Martingale split", 1098.5);
y = 468.3;
label(874, y, 11, "set");
dropdown(894, 945.5, y, 898.5, 34, "Result_is");
label(949.5, y, 7.5, "to");
value(962, 988.5, y, 967, 16.5, "Loss");
circleButton(872, 488, true);
circleButton(863.7, 528.7, true);
```
